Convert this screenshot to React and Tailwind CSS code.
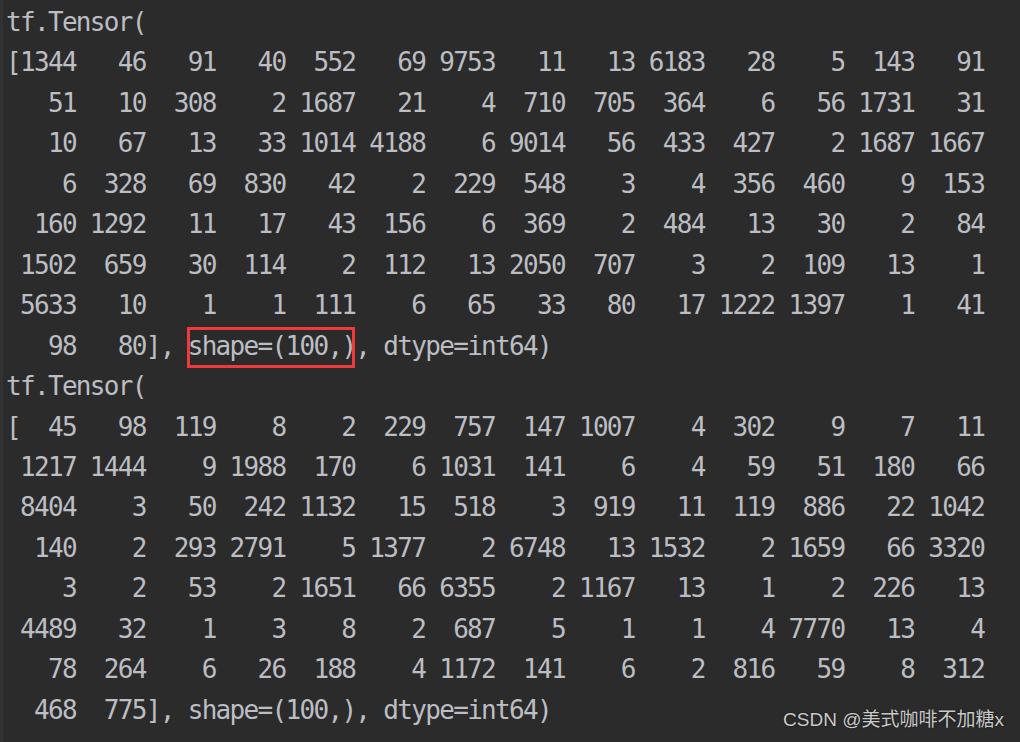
import React from "react";

const first = [
  [1344, 46, 91, 40, 552, 69, 9753, 11, 13, 6183, 28, 5, 143, 91],
  [51, 10, 308, 2, 1687, 21, 4, 710, 705, 364, 6, 56, 1731, 31],
  [10, 67, 13, 33, 1014, 4188, 6, 9014, 56, 433, 427, 2, 1687, 1667],
  [6, 328, 69, 830, 42, 2, 229, 548, 3, 4, 356, 460, 9, 153],
  [160, 1292, 11, 17, 43, 156, 6, 369, 2, 484, 13, 30, 2, 84],
  [1502, 659, 30, 114, 2, 112, 13, 2050, 707, 3, 2, 109, 13, 1],
  [5633, 10, 1, 1, 111, 6, 65, 33, 80, 17, 1222, 1397, 1, 41],
  [98, 80],
];

const second = [
  [45, 98, 119, 8, 2, 229, 757, 147, 1007, 4, 302, 9, 7, 11],
  [1217, 1444, 9, 1988, 170, 6, 1031, 141, 6, 4, 59, 51, 180, 66],
  [8404, 3, 50, 242, 1132, 15, 518, 3, 919, 11, 119, 886, 22, 1042],
  [140, 2, 293, 2791, 5, 1377, 2, 6748, 13, 1532, 2, 1659, 66, 3320],
  [3, 2, 53, 2, 1651, 66, 6355, 2, 1167, 13, 1, 2, 226, 13],
  [4489, 32, 1, 3, 8, 2, 687, 5, 1, 1, 4, 7770, 13, 4],
  [78, 264, 6, 26, 188, 4, 1172, 141, 6, 2, 816, 59, 8, 312],
  [468, 775],
];

const row = (nums, i) =>
  (i === 0 ? "[" : " ") + nums.map((n) => String(n).padStart(4)).join(" ");

const TensorBlock = ({ rows, boxed }) => (
  <>
    <div>tf.Tensor(</div>
    {rows.map((nums, i) =>
      i < rows.length - 1 ? (
        <div key={i}>{row(nums, i)}</div>
      ) : (
        <div key={i}>
          {row(nums, i)}],{" "}
          {boxed ? (
            <span className="relative">
              shape=(100,)
              <span className="absolute left-[-1px] right-[0px] top-[-4px] bottom-[-7px] border-[3px] border-[#ee3a3a]" />
            </span>
          ) : (
            "shape=(100,)"
          )}
          , dtype=int64)
        </div>
      )
    )}
  </>
);

export default function App() {
  return (
    <div className="relative flex h-[742px] w-[1020px] overflow-hidden bg-[#2b2b2b]">
      {/* gutter edge */}
      <div className="w-[3px] shrink-0 bg-[#323335]" />

      {/* console output */}
      <div
        className="flex-1 whitespace-pre pl-[3px] pt-[2px] text-[26px] leading-[40.45px] tracking-[-1.68px] text-[#bcbec3]"
        style={{ fontFamily: '"DejaVu Sans Mono", "Liberation Mono", monospace' }}
      >
        <TensorBlock rows={first} boxed />
        <TensorBlock rows={second} />
      </div>

      {/* watermark */}
      <div
        className="absolute bottom-[12px] right-[16px] text-[19px] leading-[20px] text-[#c9c9c9] [text-shadow:0_0_2px_rgba(0,0,0,0.6)]"
        style={{ fontFamily: '"Liberation Sans", "Noto Sans CJK SC", sans-serif' }}
      >
        CSDN @美式咖啡不加糖x
      </div>
    </div>
  );
}
